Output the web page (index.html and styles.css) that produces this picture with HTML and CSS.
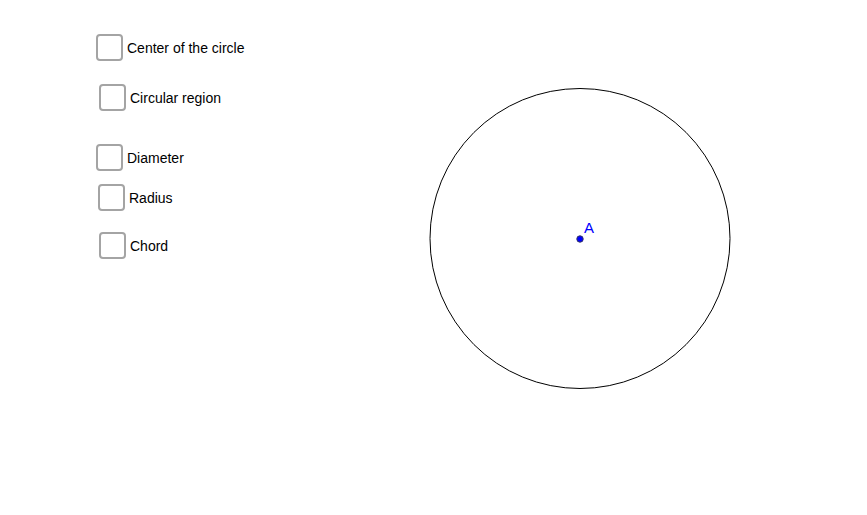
FILE: index.html
```html
<!DOCTYPE html>
<html>
<head>
<meta charset="utf-8">
<link rel="stylesheet" href="styles.css">
</head>
<body>
<div class="canvas">
  <svg class="drawing" width="867" height="515" viewBox="0 0 867 515">
    <circle cx="580" cy="238.5" r="150" fill="none" stroke="#000" stroke-width="1"/>
    <circle cx="580" cy="239" r="3.2" fill="#0000ff" stroke="#333366" stroke-width="1"/>
    <text x="584" y="232.5" class="label">A</text>
  </svg>
  <label class="cb cb1"><span class="box"></span><span class="txt">Center of the circle</span></label>
  <label class="cb cb2"><span class="box"></span><span class="txt">Circular region</span></label>
  <label class="cb cb3"><span class="box"></span><span class="txt">Diameter</span></label>
  <label class="cb cb4"><span class="box"></span><span class="txt">Radius</span></label>
  <label class="cb cb5"><span class="box"></span><span class="txt">Chord</span></label>
</div>
</body>
</html>
```
FILE: styles.css
```css
html, body {
  margin: 0;
  padding: 0;
  background: #fff;
}
.canvas {
  position: relative;
  width: 867px;
  height: 515px;
  overflow: hidden;
  font-family: "Liberation Sans", Arial, sans-serif;
  font-size: 14px;
  color: #000;
}
.drawing {
  position: absolute;
  left: 0;
  top: 0;
}
.label {
  font-family: "Liberation Sans", Arial, sans-serif;
  font-size: 15px;
  fill: #0000ff;
}
.cb {
  position: absolute;
  display: flex;
  align-items: center;
  gap: 4px;
}
.box {
  width: 23px;
  height: 23px;
  border: 2px solid #a4a4a4;
  border-radius: 4px;
  background: #fff;
}
.txt {
  line-height: 16px;
}
.cb1 { left: 96px; top: 34px; }
.cb2 { left: 99px; top: 84px; }
.cb3 { left: 96px; top: 144px; }
.cb4 { left: 98px; top: 184px; }
.cb5 { left: 99px; top: 232px; }
```
